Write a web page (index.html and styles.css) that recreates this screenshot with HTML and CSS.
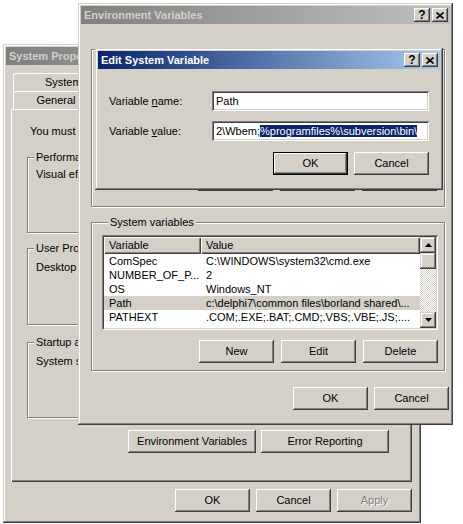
FILE: index.html
```html
<!DOCTYPE html>
<html lang="en">
<head>
	<meta charset="UTF-8">
	<title>Environment Variables</title>
	<link rel="stylesheet" href="styles.css">
</head>
<body>
	<!-- System Properties (back window) -->
	<div class="win" id="sysprop">
		<div class="caption inactive">
			<span class="cap-text">System Properties</span>
			<span class="cap-btns"><span class="cbtn">?</span><span class="cbtn"><svg width="8" height="7" viewBox="0 0 8 7"><path d="M0.5 0.5L7.5 6.5M7.5 0.5L0.5 6.5" stroke="#000" stroke-width="1.6"/></svg></span></span>
		</div>
		<div class="sp-body">
			<div class="tabrow">
				<span class="tab w142">System Restore</span>
				<span class="tab w134">Automatic Updates</span>
				<span class="tab w121">Remote</span>
			</div>
			<div class="tabrow">
				<span class="tab w86">General</span>
				<span class="tab w112">Computer Name</span>
				<span class="tab w90">Hardware</span>
				<span class="tab w111">Advanced</span>
			</div>
			<div class="panel">
				<p class="note">You must be logged on as an Administrator to make most of these changes.</p>
				<div class="group g-perf">
					<div class="legend">Performance</div>
					<p class="gtext">Visual effects, processor scheduling, memory usage, and virtual memory</p>
				</div>
				<div class="group g-prof">
					<div class="legend">User Profiles</div>
					<p class="gtext">Desktop settings related to your logon</p>
				</div>
				<div class="group g-start">
					<div class="legend">Startup and Recovery</div>
					<p class="gtext">System startup, system failure, and debugging information</p>
				</div>
				<div class="panel-btns">
					<span class="btn w128">Environment Variables</span>
					<span class="btn w128">Error Reporting</span>
				</div>
			</div>
			<div class="dlg-btns">
				<span class="btn">OK</span>
				<span class="btn">Cancel</span>
				<span class="btn dis">Apply</span>
			</div>
		</div>
	</div>

	<!-- Environment Variables -->
	<div class="win" id="envvars">
		<div class="caption inactive">
			<span class="cap-text">Environment Variables</span>
			<span class="cap-btns"><span class="cbtn">?</span><span class="cbtn"><svg width="8" height="7" viewBox="0 0 8 7"><path d="M0.5 0.5L7.5 6.5M7.5 0.5L0.5 6.5" stroke="#000" stroke-width="1.6"/></svg></span></span>
		</div>
		<div class="ev-body">
			<div class="group g-user">
				<div class="grow"></div>
				<div class="grp-btns">
					<span class="btn">New</span>
					<span class="btn">Edit</span>
					<span class="btn">Delete</span>
				</div>
			</div>
			<div class="group g-sys">
				<div class="legend">System variables</div>
				<div class="listview">
					<div class="lv-main">
						<div class="lv-row lv-head"><span class="c1">Variable</span><span class="c2">Value</span></div>
						<div class="lv-row"><span class="c1">ComSpec</span><span class="c2">C:\WINDOWS\system32\cmd.exe</span></div>
						<div class="lv-row"><span class="c1">NUMBER_OF_P...</span><span class="c2">2</span></div>
						<div class="lv-row"><span class="c1">OS</span><span class="c2">Windows_NT</span></div>
						<div class="lv-row sel"><span class="c1">Path</span><span class="c2">c:\delphi7\common files\borland shared\...</span></div>
						<div class="lv-row"><span class="c1">PATHEXT</span><span class="c2">.COM;.EXE;.BAT;.CMD;.VBS;.VBE;.JS;....</span></div>
					</div>
					<div class="vscroll">
						<span class="sbtn"><svg width="7" height="4" viewBox="0 0 7 4"><path d="M3.5 0L7 4H0Z"/></svg></span>
						<span class="sbtn thumb"></span>
						<span class="track"></span>
						<span class="sbtn"><svg width="7" height="4" viewBox="0 0 7 4"><path d="M0 0H7L3.5 4Z"/></svg></span>
					</div>
				</div>
				<div class="grp-btns">
					<span class="btn">New</span>
					<span class="btn">Edit</span>
					<span class="btn">Delete</span>
				</div>
			</div>
			<div class="dlg-btns">
				<span class="btn">OK</span>
				<span class="btn">Cancel</span>
			</div>
		</div>
	</div>

	<!-- Edit System Variable (active) -->
	<div class="win" id="editvar">
		<div class="caption">
			<span class="cap-text">Edit System Variable</span>
			<span class="cap-btns"><span class="cbtn">?</span><span class="cbtn"><svg width="8" height="7" viewBox="0 0 8 7"><path d="M0.5 0.5L7.5 6.5M7.5 0.5L0.5 6.5" stroke="#000" stroke-width="1.6"/></svg></span></span>
		</div>
		<div class="ed-body">
			<div class="field-row">
				<span class="lbl">Variable <u>n</u>ame:</span>
				<span class="edit">Path</span>
			</div>
			<div class="field-row">
				<span class="lbl">Variable <u>v</u>alue:</span>
				<span class="edit">2\Wbem;<span class="hl">%programfiles%\subversion\bin\</span></span>
			</div>
			<div class="dlg-btns">
				<span class="btn def">OK</span>
				<span class="btn">Cancel</span>
			</div>
		</div>
	</div>
</body>
</html>
```

FILE: styles.css
```css
html *{
	margin:0;
	padding:0;
	box-sizing:border-box;
}
body{
	width:463px;
	height:524px;
	overflow:hidden;
	position:relative;
	background:#fff;
	color:#000;
	font:11px/13px "Liberation Sans", Arial, sans-serif;
}

/* windows */
.win{
	position:absolute;
	display:flex;
	flex-direction:column;
	padding:3px;
	background:#d4d0c8;
	box-shadow:inset -1px -1px #404040, inset 1px 1px #d4d0c8, inset -2px -2px #808080, inset 2px 2px #fff;
}
#sysprop{
	left:3px;
	top:44px;
	width:418px;
	height:479px;
	z-index:1;
}
#envvars{
	left:78px;
	top:3px;
	width:375px;
	height:422px;
	z-index:2;
}
#editvar{
	left:95px;
	top:48px;
	width:348px;
	height:142px;
	z-index:3;
}

.caption{
	height:18px;
	display:flex;
	align-items:center;
	padding:0 2px 0 3px;
	font-weight:bold;
	color:#fff;
	background:linear-gradient(to right, #0a246a, #a6caf0);
}
.caption.inactive{
	color:#d4d0c8;
	background:linear-gradient(to right, #808080, #c0c0c0);
}
.cap-text{
	flex:1;
	white-space:nowrap;
	overflow:hidden;
}
.cap-btns{
	display:flex;
	gap:2px;
}
.cbtn{
	width:16px;
	height:14px;
	display:flex;
	align-items:center;
	justify-content:center;
	color:#000;
	font-size:12px;
	font-weight:bold;
	background:#d4d0c8;
	box-shadow:inset -1px -1px #404040, inset 1px 1px #fff, inset -2px -2px #808080;
}

/* buttons */
.btn{
	width:75px;
	height:23px;
	display:flex;
	align-items:center;
	justify-content:center;
	white-space:nowrap;
	background:#d4d0c8;
	box-shadow:inset -1px -1px #404040, inset 1px 1px #fff, inset -2px -2px #808080;
}
.btn.w128{
	width:128px;
}
.btn.def{
	border:1px solid #000;
	box-shadow:inset -1px -1px #404040, inset 1px 1px #fff, inset -2px -2px #808080;
}
.btn.dis{
	color:#808080;
	text-shadow:1px 1px #fff;
}
.dlg-btns{
	display:flex;
	justify-content:flex-end;
	gap:6px;
}

/* group boxes */
.group{
	display:flex;
	flex-direction:column;
	border:1px solid #808080;
	box-shadow:inset 1px 1px #fff, 1px 1px #fff;
}
.legend{
	align-self:flex-start;
	margin:-7px 0 0 6px;
	padding:0 2px;
	background:#d4d0c8;
	white-space:nowrap;
}

/* system properties */
.sp-body{
	flex:1;
	display:flex;
	flex-direction:column;
	padding:8px 6px 0 5px;
}
.tabrow{
	display:flex;
	height:18px;
	padding-left:2px;
}
.tab{
	height:18px;
	line-height:18px;
	text-align:center;
	white-space:nowrap;
	border-radius:2px 2px 0 0;
	box-shadow:inset 1px 1px #fff, inset -1px 0 #404040, inset -2px 0 #808080;
}
.w86{ width:86px; }
.w90{ width:90px; }
.w111{ width:111px; }
.w112{ width:112px; }
.w121{ width:121px; }
.w134{ width:134px; }
.w142{ width:142px; }
.panel{
	height:373px;
	display:flex;
	flex-direction:column;
	padding:16px 15px 0 16px;
	box-shadow:inset 1px 1px #fff, inset -1px -1px #404040, inset -2px -2px #808080;
}
.note{
	padding-left:3px;
	white-space:nowrap;
}
.gtext{
	margin-top:4px;
	padding-left:8px;
	white-space:nowrap;
}
.g-prof .gtext,
.g-start .gtext{
	margin-top:6px;
}
.g-perf{
	margin-top:19px;
	height:76px;
}
.g-prof{
	margin-top:15px;
	height:77px;
}
.g-start{
	margin-top:17px;
	height:76px;
}
.panel-btns{
	display:flex;
	justify-content:flex-end;
	gap:5px;
	margin-top:12px;
	padding-right:8px;
}
#sysprop .dlg-btns{
	margin-top:7px;
}

/* environment variables */
.ev-body{
	flex:1;
	display:flex;
	flex-direction:column;
	padding:25px 1px 0 10px;
}
.g-user{
	height:158px;
	margin-right:4px;
	padding:0 7px 15px 0;
}
.grow{
	flex:1;
}
.grp-btns{
	display:flex;
	justify-content:flex-end;
	gap:7px;
}
.g-sys{
	height:149px;
	margin:15px 4px 0 0;
	padding:0 6px 0 10px;
}
.listview{
	height:95px;
	margin-top:6px;
	display:flex;
	padding:2px;
	background:#fff;
	box-shadow:inset 1px 1px #808080, inset -1px -1px #fff, inset 2px 2px #404040, inset -2px -2px #d4d0c8;
}
.lv-main{
	flex:1;
	overflow:hidden;
}
.lv-row{
	display:flex;
	height:14px;
	line-height:14px;
	white-space:nowrap;
}
.lv-row.lv-head{
	height:17px;
	line-height:17px;
}
.lv-head span{
	background:#d4d0c8;
	box-shadow:inset 1px 1px #fff, inset -1px -1px #404040, inset -2px -2px #808080;
}
.lv-row.sel{
	background:#d4d0c8;
}
.c1{
	width:97px;
	padding-left:5px;
	overflow:hidden;
}
.c2{
	flex:1;
	padding-left:5px;
	overflow:hidden;
}
.vscroll{
	width:16px;
	display:flex;
	flex-direction:column;
}
.sbtn{
	height:16px;
	display:flex;
	align-items:center;
	justify-content:center;
	background:#d4d0c8;
	box-shadow:inset -1px -1px #404040, inset 1px 1px #d4d0c8, inset -2px -2px #808080, inset 2px 2px #fff;
}
.track{
	flex:1;
	background:repeating-conic-gradient(#d4d0c8 0 25%, #fff 0 50%) 0 0/2px 2px;
}
.g-sys .grp-btns{
	margin-top:10px;
}
#envvars .dlg-btns{
	margin-top:16px;
}

/* edit system variable */
.ed-body{
	flex:1;
	display:flex;
	flex-direction:column;
	gap:10px;
	padding:22px 11px 0 11px;
}
.field-row{
	display:flex;
	align-items:center;
}
.lbl{
	width:103px;
}
.edit{
	flex:1;
	height:20px;
	line-height:16px;
	padding:2px 4px;
	white-space:nowrap;
	overflow:hidden;
	background:#fff;
	box-shadow:inset 1px 1px #808080, inset -1px -1px #fff, inset 2px 2px #404040, inset -2px -2px #d4d0c8;
}
.hl{
	background:#0a246a;
	color:#fff;
}
#editvar .dlg-btns{
	margin-top:1px;
}
```
